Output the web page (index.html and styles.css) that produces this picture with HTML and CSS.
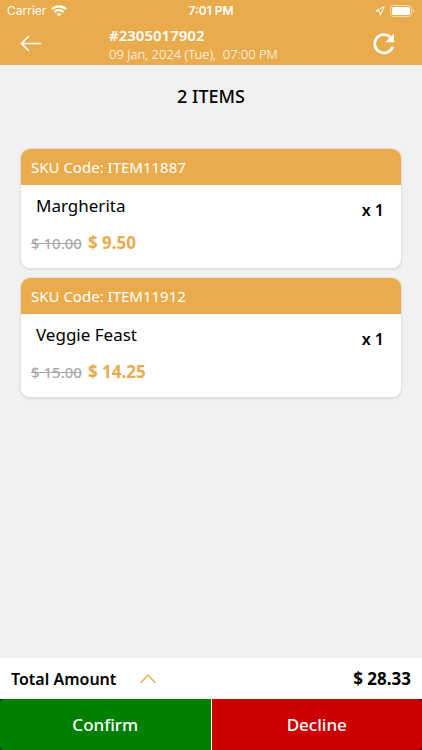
FILE: index.html
```html
<!DOCTYPE html>
<html lang="en">
<head>
<meta charset="utf-8">
<meta name="viewport" content="width=device-width, initial-scale=1">
<title>Order #2305017902</title>
<link rel="stylesheet" href="styles.css">
</head>
<body>
<header class="top">
  <div class="status">
    <div class="status-left">
      <span>Carrier</span>
      <svg width="16" height="12" viewBox="0 0 16 12" fill="none" stroke="#fff" stroke-width="2.200" aria-hidden="true"><path d="M1 4.3a10 10 0 0 1 14 0M3.6 7a6.3 6.3 0 0 1 8.8 0"/><path d="M8 11.6 5.7 9.2a3.3 3.3 0 0 1 4.6 0Z" fill="#fff" stroke="none"/></svg>
    </div>
    <span class="clock">7:01 PM</span>
    <div class="status-right">
      <svg width="10" height="10" viewBox="0 0 10 10" fill="none" stroke="#fff" stroke-linejoin="round" aria-hidden="true"><path d="M9.2.8.9 4.8l3.8.5.6 3.9Z"/></svg>
      <svg width="25" height="12" viewBox="0 0 25 12" aria-hidden="true"><rect x=".5" y=".5" width="21" height="11" rx="3" fill="none" stroke="#fff" stroke-opacity=".55"/><rect x="2" y="2" width="18" height="8" rx="1.6" fill="#fff"/><path d="M23 4v4c1.7-.7 1.7-3.300 0-4Z" fill="#fff" fill-opacity=".6"/></svg>
    </div>
  </div>
  <nav class="bar">
    <button class="icon-button" type="button" aria-label="Back">
      <svg width="22" height="18" viewBox="0 0 22 18" fill="none" stroke="#fff" stroke-width="1.600" stroke-linecap="round" stroke-linejoin="round"><path d="M20.500 8.500H1.500M8.500 1.500l-7 7 7 7"/></svg>
    </button>
    <div class="order">
      <h1 class="order-id">#2305017902</h1>
      <p class="order-date">09 Jan, 2024 (Tue),&nbsp; 07:00 PM</p>
    </div>
    <button class="icon-button" type="button" aria-label="Refresh">
      <svg width="22" height="22" viewBox="0 0 22 22" fill="none" stroke="#fff" stroke-width="2.700"><path d="M19.700 13.600A9.200 9.200 0 1 1 17 3.800"/><path d="M21 .5v8.800h-8.800Z" fill="#fff" stroke="none"/></svg>
    </button>
  </nav>
</header>

<main class="content">
  <h2 class="count">2 ITEMS</h2>
  <ul class="items">
    <li class="card">
      <div class="sku">SKU Code: ITEM11887</div>
      <div class="card-body">
        <div>
          <h3 class="name">Margherita</h3>
          <p class="prices"><s class="old">$ 10.00</s><strong class="price">$ 9.50</strong></p>
        </div>
        <span class="quantity">x 1</span>
      </div>
    </li>
    <li class="card">
      <div class="sku">SKU Code: ITEM11912</div>
      <div class="card-body">
        <div>
          <h3 class="name">Veggie Feast</h3>
          <p class="prices"><s class="old">$ 15.00</s><strong class="price">$ 14.25</strong></p>
        </div>
        <span class="quantity">x 1</span>
      </div>
    </li>
  </ul>
</main>

<footer class="bottom">
  <div class="total">
    <span class="total-label">Total Amount</span>
    <button class="expand" type="button" aria-label="Show breakdown">
      <svg width="16" height="10" viewBox="0 0 16 10" fill="none" stroke="#e9ab4b" stroke-width="1.300" stroke-linecap="round" stroke-linejoin="round"><path d="M1 8.500 8 1l7 7.500"/></svg>
    </button>
    <strong class="total-value">$ 28.33</strong>
  </div>
  <div class="actions">
    <button class="action confirm" type="button">Confirm</button>
    <button class="action decline" type="button">Decline</button>
  </div>
</footer>
</body>
</html>
```
FILE: styles.css
```css
* {
  box-sizing: border-box;
}

body {
  margin: 0;
  min-height: 100vh;
  display: flex;
  flex-direction: column;
  background: #f1f1f1;
  color: #000;
  font-family: "Noto Sans", "Open Sans", sans-serif;
}

h1, h2, h3, p, ul {
  margin: 0;
  padding: 0;
}

button {
  padding: 0;
  border: 0;
  background: none;
  font: inherit;
  cursor: pointer;
}

svg {
  display: block;
}

.top {
  background: #e9ab4b;
  color: #fff;
}

.status {
  display: grid;
  grid-template-columns: 1fr auto 1fr;
  align-items: center;
  height: 22px;
  padding: 0 7px;
  font: 12px/22px Inter, sans-serif;
}

.status-left,
.status-right {
  display: flex;
  align-items: center;
  gap: 5px;
}

.status-right {
  justify-content: flex-end;
}

.clock {
  font-weight: 600;
}

.bar {
  display: flex;
  align-items: center;
  height: 43px;
  padding: 0 27px 0 20px;
}

.icon-button {
  flex: none;
}

.order {
  flex: 1;
  padding-left: 67px;
}

.order-id {
  font-size: 15px;
  line-height: 20px;
  font-weight: 600;
}

.order-date {
  font-size: 13px;
  line-height: 18px;
  font-weight: 300;
}

.content {
  flex: 1;
  padding: 18px 20px;
}

.count {
  font-size: 18px;
  line-height: 26px;
  font-weight: 500;
  text-align: center;
}

.items {
  display: grid;
  gap: 8px;
  margin-top: 39px;
  list-style: none;
}

.card {
  overflow: hidden;
  border: 1px solid #e2e2e2;
  border-radius: 10px;
  background: #fff;
  box-shadow: 0 1px 2px #0000001a;
}

.sku {
  padding: 0 10px;
  background: #e9ab4b;
  color: #fff;
  font-size: 15px;
  line-height: 36px;
}

.card-body {
  display: flex;
  justify-content: space-between;
  padding: 8px 17px 12px 10px;
}

.name {
  padding-left: 5px;
  font-size: 17px;
  line-height: 26px;
  font-weight: 400;
}

.prices {
  display: flex;
  align-items: center;
  gap: 6px;
  margin-top: 11px;
  line-height: 26px;
}

.old {
  color: #aaa;
  font-size: 15px;
  font-weight: 500;
}

.price {
  color: #e9ab4b;
  font-size: 17px;
  font-weight: 700;
}

.quantity {
  padding-top: 4px;
  font-size: 16px;
  line-height: 26px;
  font-weight: 600;
}

.total {
  display: flex;
  align-items: center;
  height: 41px;
  padding: 0 11px;
  background: #fff;
  font-size: 16px;
}

.total-label {
  font-weight: 600;
}

.expand {
  margin-left: 24px;
}

.total-value {
  margin-left: auto;
  font-size: 17px;
  font-weight: 700;
}

.actions {
  display: grid;
  grid-template-columns: 1fr 1fr;
  gap: 1px;
  background: linear-gradient(90deg, #222 49%, #fff 49%, #fff 51%, #222 51%);
}

.action {
  height: 51px;
  color: #fff;
  font-size: 17px;
  font-weight: 500;
}

.confirm {
  border-radius: 4px 0 0 4px;
  background: #008000;
}

.decline {
  border-radius: 0 4px 4px 0;
  background: #c00;
}
```
